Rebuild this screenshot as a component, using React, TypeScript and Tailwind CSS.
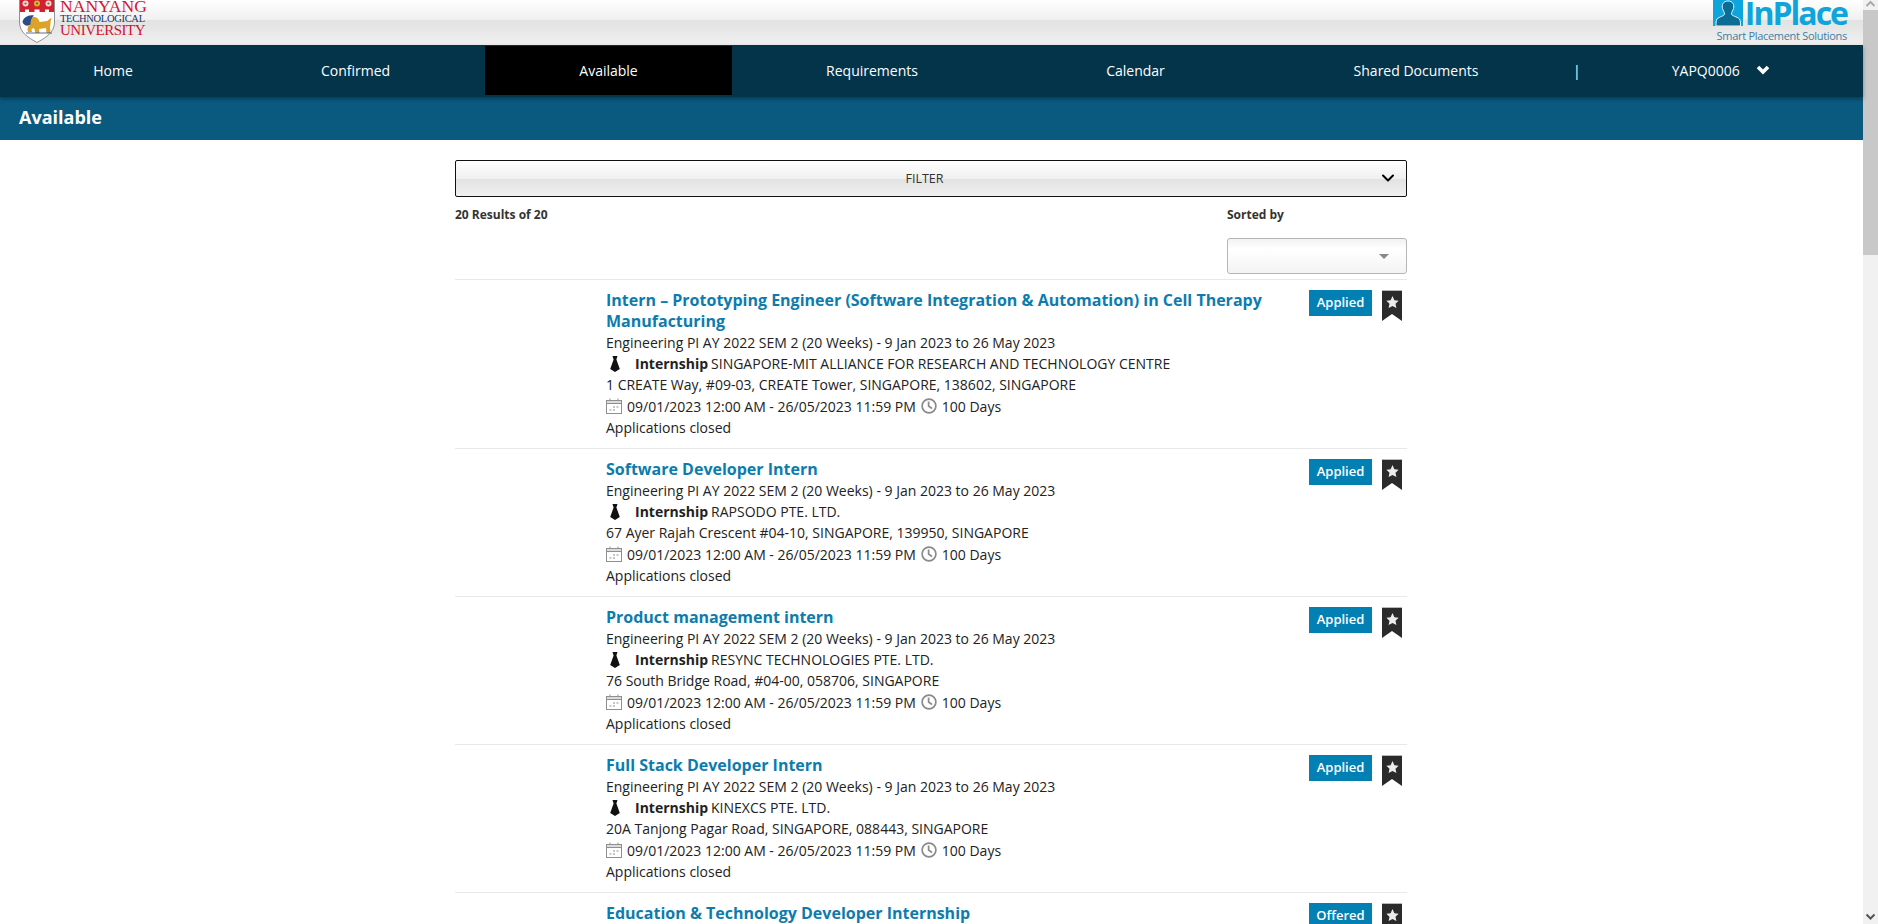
import { ChevronDown } from 'lucide-react';

interface Placement {
  title: string[];
  company: string;
  address: string;
  status: string;
}

const PERIOD = 'Engineering PI AY 2022 SEM 2 (20 Weeks) - 9 Jan 2023 to 26 May 2023';

const placements: Placement[] = [
  {
    title: ['Intern – Prototyping Engineer (Software Integration & Automation) in Cell Therapy', 'Manufacturing'],
    company: 'SINGAPORE-MIT ALLIANCE FOR RESEARCH AND TECHNOLOGY CENTRE',
    address: '1 CREATE Way, #09-03, CREATE Tower, SINGAPORE, 138602, SINGAPORE',
    status: 'Applied',
  },
  {
    title: ['Software Developer Intern'],
    company: 'RAPSODO PTE. LTD.',
    address: '67 Ayer Rajah Crescent #04-10, SINGAPORE, 139950, SINGAPORE',
    status: 'Applied',
  },
  {
    title: ['Product management intern'],
    company: 'RESYNC TECHNOLOGIES PTE. LTD.',
    address: '76 South Bridge Road, #04-00, 058706, SINGAPORE',
    status: 'Applied',
  },
  {
    title: ['Full Stack Developer Intern'],
    company: 'KINEXCS PTE. LTD.',
    address: '20A Tanjong Pagar Road, SINGAPORE, 088443, SINGAPORE',
    status: 'Applied',
  },
  {
    title: ['Education & Technology Developer Internship'],
    company: '',
    address: '',
    status: 'Offered',
  },
];

const navItems = [
  { label: 'Home', width: 'w-[226px]' },
  { label: 'Confirmed', width: 'w-[259px]' },
  { label: 'Available', width: 'w-[247px]', active: true },
  { label: 'Requirements', width: 'w-[280px]' },
  { label: 'Calendar', width: 'w-[247px]' },
  { label: 'Shared Documents', width: 'w-[314px]' },
];

function Crest() {
  return (
    <svg viewBox="0 0 36 44" className="h-[44px] w-[36px]" aria-hidden>
      <path d="M0.5 -2 H35.5 V22 C35.5 33 26 38 18 42.5 C10 38 0.5 33 0.5 22 Z" fill="#fff" stroke="#777" strokeWidth="0.8" />
      {/* red chief with a crenellated lower edge */}
      <path d="M1 -2 H35 V12 H30 V9.5 H26 V12 H20.5 V9.5 H15.5 V12 H10 V9.5 H6 V12 H1 Z" fill="#d3202f" />
      <circle cx="6.5" cy="3.5" r="3" fill="#e9dcd4" />
      <circle cx="18" cy="3.5" r="3" fill="#d9b23a" />
      <circle cx="29.5" cy="3.5" r="3" fill="#e9dcd4" />
      <circle cx="6.5" cy="3.5" r="1.1" fill="#b04848" />
      <circle cx="18" cy="3.5" r="1.1" fill="#7d5a20" />
      <circle cx="29.5" cy="3.5" r="1.1" fill="#b04848" />
      <path d="M9 32 C8 28 9 26 11 25 C9 22 11 17 15 17 C18 17 20 19 20.5 22 L28 21 C30 20 31 18 33 18 C31 20 32 24 31 27 L31.5 33 H27.5 L27 28 L20 29 L20.5 33 H16.5 L15 28 L12.5 29 L13 32 Z" fill="#dca32b" />
      <path d="M3.5 22 C4 17.5 10 14 15 15.5 C12 18 11.5 21 11.5 24.5 C9 26.5 5 26 3.5 22 Z" fill="#2c4d86" />
      <path d="M7 33 H33" stroke="#2c4d86" strokeWidth="0.8" />
    </svg>
  );
}

function NtuLogo() {
  return (
    <div className="flex h-[45px] items-start pl-[19px]">
      <Crest />
      <div className="ml-[5px] flex flex-col font-['Liberation_Serif',serif]">
        <span className="text-[17.6px] leading-[12px] text-[#d3142f]">NANYANG</span>
        <span className="text-[10.5px] leading-[13px] tracking-[-0.3px] text-[#1c3367]">TECHNOLOGICAL</span>
        <span className="text-[15px] leading-[10px] tracking-[-0.5px] text-[#d3142f]">UNIVERSITY</span>
      </div>
    </div>
  );
}

function InPlaceLogo() {
  return (
    <div className="mr-[16px] flex h-[45px] flex-col items-end">
      <div className="flex h-[26px] items-start">
        <svg viewBox="0 0 30 26" className="h-[26px] w-[30px]" aria-hidden>
          <rect width="30" height="26" fill="#0ea5dc" />
          <path
            d="M15 1 C20 1 21.5 5 20.5 8.5 C20 10.5 18.5 12 18.5 14 C18.5 16 24 16.5 26.5 19 C27.5 20.5 27.5 23 27.5 26 H3 C3 23 3 20.5 4 19 C6.5 16.5 11.5 16 11.5 14 C11.5 12 10 10.5 9.5 8.5 C8.5 5 10 1 15 1 Z"
            fill="#0a6d94"
            stroke="#e8f6fc"
            strokeWidth="1"
          />
        </svg>
        <span className="ml-[2px] text-[32px] font-bold leading-[26px] tracking-[-2px] text-[#0ea5dc]">
          InPlace
        </span>
      </div>
      <span className="mt-[3px] text-[11px] leading-[13px] tracking-[-0.3px] text-[#3d7f9f]">
        Smart Placement Solutions
      </span>
    </div>
  );
}

function TieIcon() {
  return (
    <svg viewBox="0 0 12 16" className="h-[16px] w-[12px]" aria-hidden>
      <path d="M3.5 0 H8.5 L7.4 3.5 L10.8 13 L6 16 L1.2 13 L4.6 3.5 Z" fill="#111" />
    </svg>
  );
}

function CalendarIcon() {
  return (
    <svg viewBox="0 0 16 16" className="h-[16px] w-[16px]" fill="none" stroke="#8f8f8f" aria-hidden>
      <rect x="0.5" y="2.5" width="15" height="13" />
      <rect x="0.5" y="2.5" width="15" height="3" fill="#dcdcdc" />
      <path d="M4 0.5 V3 M12 0.5 V3" />
      <path d="M7 9 H9 M10.5 9 H12.5 M3.5 12 H5.5 M7 12 H9" strokeWidth="1.2" />
    </svg>
  );
}

function ClockIcon() {
  return (
    <svg viewBox="0 0 16 16" className="h-[16px] w-[16px]" fill="none" stroke="#8a8a8a" strokeWidth="1.7" aria-hidden>
      <circle cx="8" cy="8" r="6.9" />
      <path d="M7.6 3.5 V8 L11 10.5" />
    </svg>
  );
}

function Bookmark() {
  return (
    <svg viewBox="0 0 20 31" className="h-[31px] w-[20px]" aria-hidden>
      <path d="M0 0 H20 V31 L10 24 L0 31 Z" fill="#2b2b2b" />
      <path d="M0 0.5 H20" stroke="#b8b8b8" strokeWidth="1" />
      <path d="M10.5 6 L12.4 10.2 L16.6 10.7 L13.5 13.7 L14.4 18 L10.5 15.9 L6.6 18 L7.5 13.7 L4.4 10.7 L8.6 10.2 Z" fill="#ececec" />
    </svg>
  );
}

function PlacementRow({ item }: { item: Placement }) {
  return (
    <div className="flex border-t border-[#e8e8e8] pt-[10px] pb-[10px] pl-[151px] pr-[5px]">
      <div className="min-w-0 flex-1 text-[14px] leading-[21.2px] text-[#222]">
        <h3 className="text-[16px] font-bold leading-[21px] text-[#0c7cae]">
          {item.title.map((line) => (
            <span key={line} className="block">
              {line}
            </span>
          ))}
        </h3>
        {item.company && (
          <>
            <div>{PERIOD}</div>
            <div className="flex items-center">
              <span className="flex w-[29px] shrink-0 pl-[3px]">
                <TieIcon />
              </span>
              <span className="mr-[3px] font-bold">Internship</span>
              {item.company}
            </div>
            <div>{item.address}</div>
            <div className="flex items-center">
              <span className="mr-[5px]">
                <CalendarIcon />
              </span>
              09/01/2023 12:00 AM - 26/05/2023 11:59 PM
              <span className="mx-[5px]">
                <ClockIcon />
              </span>
              100 Days
            </div>
            <div>Applications closed</div>
          </>
        )}
      </div>
      <div className="ml-[20px] flex w-[93px] shrink-0 items-start justify-end">
        <span className="flex h-[26px] w-[63px] items-center justify-center bg-[#0280b4] text-[13px] font-semibold text-white">
          {item.status}
        </span>
        <span className="ml-[10px] shrink-0">
          <Bookmark />
        </span>
      </div>
    </div>
  );
}

export default function App() {
  return (
    <div className="flex h-[924px] overflow-hidden bg-white font-['Open_Sans',sans-serif]">
      <div className="min-w-0 flex-1">
        <header className="flex h-[45px] justify-between bg-[linear-gradient(#ffffff_0%,#f0f0f0_44%,#e2e2e2_45%,#f0f0f0_100%)]">
          <NtuLogo />
          <InPlaceLogo />
        </header>

        <nav className="relative z-10 flex h-[52px] bg-[#04344a] pt-px pb-[2px] text-[14px] text-white shadow-[0_2px_4px_rgba(0,0,0,0.35)]">
          {navItems.map((item) => (
            <a
              key={item.label}
              className={`flex items-center justify-center ${item.width} ${item.active ? 'bg-black' : ''}`}
            >
              {item.label}
            </a>
          ))}
          <span className="flex items-center">|</span>
          <a className="ml-[91px] flex items-center">YAPQ0006</a>
          <svg viewBox="0 0 14 10" className="ml-[16px] mt-[19px] h-[10px] w-[14px]" aria-hidden>
            <path d="M2 2 L7 7 L12 2" fill="none" stroke="#fff" strokeWidth="3.6" />
          </svg>
        </nav>

        <div className="flex h-[43px] items-center bg-[#0a5a80] pb-[2px] pl-[19px] text-[18px] font-bold text-white">
          Available
        </div>

        <main className="ml-[455px] w-[952px] pt-[20px]">
          <button className="relative flex h-[37px] w-full items-center justify-center rounded-[2px] border border-[#111] bg-[linear-gradient(#ffffff_0%,#f0f0f0_50%,#e2e2e2_51%,#f0f0f0_100%)] pt-[1px] pr-[13px] text-[12.5px] text-[#333]">
            FILTER
            <ChevronDown className="absolute right-[8px] top-[7px] h-[20px] w-[20px] text-black" strokeWidth={2.4} />
          </button>

          <div className="flex justify-between pt-[10px]">
            <div className="text-[12px] font-bold leading-[16px] text-[#333]">20 Results of 20</div>
            <div className="w-[180px]">
              <div className="text-[12px] font-bold leading-[16px] text-[#333]">Sorted by</div>
              <div className="mt-[15px] flex h-[36px] items-center justify-end rounded-[3px] border border-[#b5b5b5] bg-[linear-gradient(#f2f2f2,#ffffff_30%,#f3f3f3)] pr-[17px]">
                <span className="border-x-[5px] border-t-[5px] border-x-transparent border-t-[#888]" />
              </div>
            </div>
          </div>

          <div className="mt-[5px]">
            {placements.map((item) => (
              <PlacementRow key={item.title[0]} item={item} />
            ))}
          </div>
        </main>
      </div>

      <div className="flex h-[924px] w-[15px] shrink-0 flex-col bg-[#f1f1f1]">
        <svg viewBox="0 0 15 10" className="h-[10px] w-[15px]" aria-hidden>
          <path d="M3.5 6 L7.5 2 L11.5 6" fill="none" stroke="#aaa" strokeWidth="2" />
        </svg>
        <div className="h-[245px] bg-[#c8c8c8]" />
        <svg viewBox="0 0 15 10" className="mt-auto mb-[2px] h-[10px] w-[15px]" aria-hidden>
          <path d="M3.5 2.5 L7.5 6.5 L11.5 2.5" fill="none" stroke="#555" strokeWidth="2" />
        </svg>
      </div>
    </div>
  );
}
